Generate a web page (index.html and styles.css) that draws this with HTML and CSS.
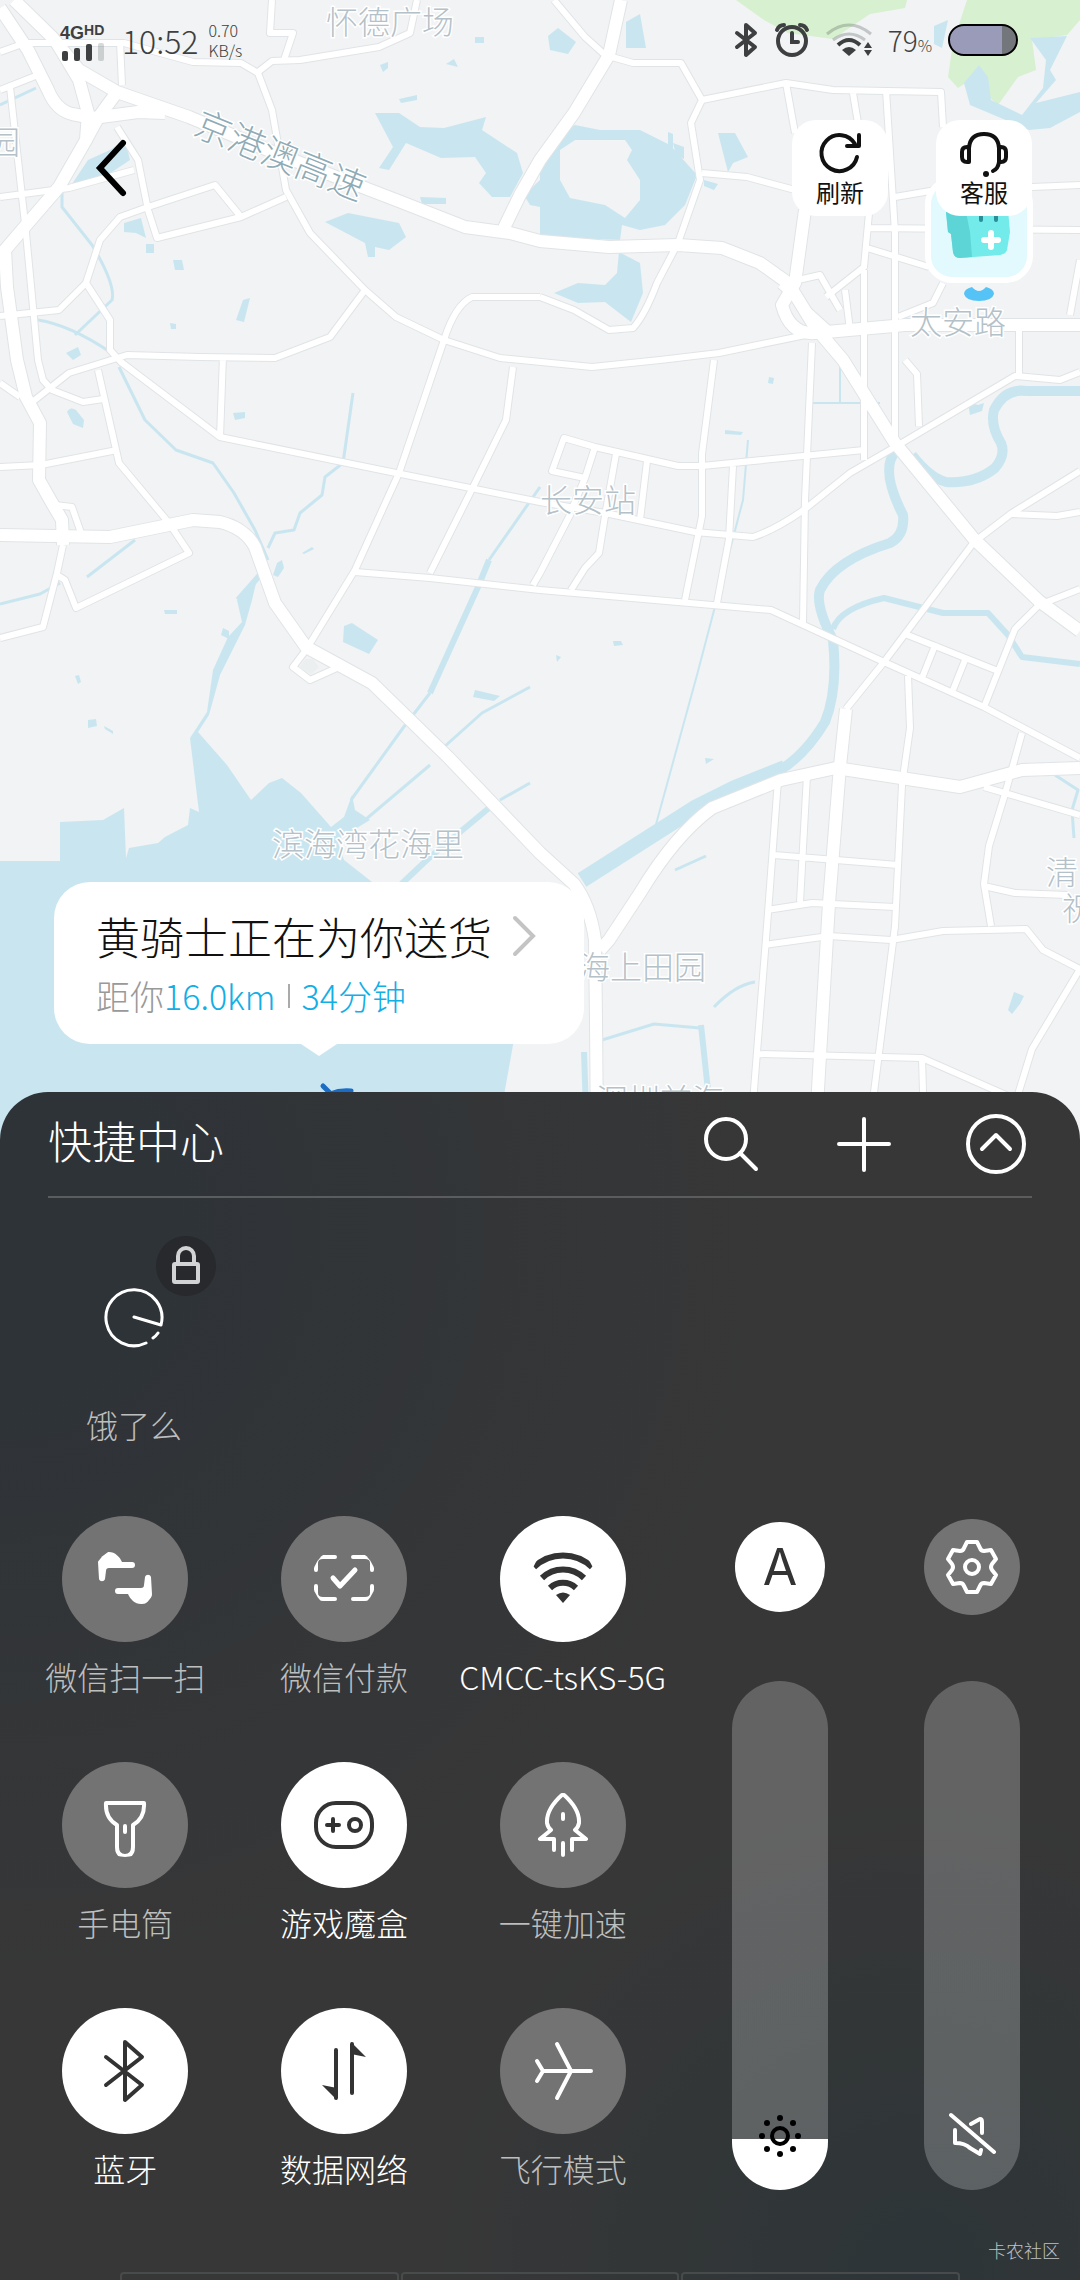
FILE: index.html
```html
<!DOCTYPE html>
<html lang="zh-CN">
	<head>
		<meta charset="UTF-8" />
		<meta name="viewport" content="width=device-width, initial-scale=1.0" />
		<title>快捷中心</title>
		<link rel="stylesheet" href="styles.css">
	</head>
	<body>
		<main class="screen">
			<section class="map">
				<svg class="map-canvas" viewBox="0 0 1080 1140" preserveAspectRatio="xMidYMin slice">
					<defs>
						<g id="highways">
							<path d="M14 0L52 37L79 70L117 92L189 117L275 153L344 180L396 200L465 227L510 233L540 241L609 247L678 245L722 248L760 263L788 283L815 327L843 360L895 443L974 539L1039 601L1080 631" />
							<path d="M0 8L28 50L48 90Q56 110 72 114L93 118L138 112L165 113" />
							<path d="M55 40L79 80L88 113L86 140L59 187L28 223L5 250L7 287L17 360L26 397L40 423L39 480L52 503L62 520L63 545" />
							<path d="M117 92L98 118L86 140M503 230L520 195L540 160L574 113L609 55L621 0" />
							<path d="M0 535L110 537L193 520L220 522Q245 528 255 547L275 603L306 647L372 683L448 757L540 853L574 884Q590 905 595 940L596 1020L597 1140" />
							<path d="M600 950L609 940L640 893Q675 835 712 808L781 780L836 768L960 787L1022 770L1080 768" />
							<path d="M846 709L840 766L829 903L815 1140M805 210L795 283L782 305Q790 335 815 333L905 325L1080 325" />
						</g>
						<g id="roads">
							<path d="M0 52L25 43L124 43L193 62L241 63L258 73L272 110L286 190L310 233L365 290L396 317L444 340L500 358L592 367L660 360L719 353L815 333" />
							<path d="M258 72L272 61L300 60L379 47L410 33L417 0M272 0L270 33L293 33L284 60M120 42L122 85" />
							<path d="M0 90L38 75M10 87L26 233L38 360L43 380L52 390L83 402L103 399M0 197L69 188L134 170" />
							<path d="M117 127L138 160L148 210L157 238L241 217L286 197M148 207L215 185L241 217" />
							<path d="M148 207L120 217L100 240L86 283L59 310L0 316M86 283L110 320L110 350L121 362L220 437L396 473L540 502L605 513L695 532L753 537Q775 530 805 509L850 473L895 447L1015 376L1060 380L1080 372" />
							<path d="M31 403L69 373L127 355L200 357L275 358L330 337L365 290M223 356L220 437" />
							<path d="M540 297L472 297Q455 305 444 340L399 473L355 570L306 650L293 667L310 680L339 667" />
							<path d="M540 297L574 310L609 330L633 328Q645 315 657 283L678 243L700 180L691 123L702 100L681 63L633 63L605 55L585 37L554 0" />
							<path d="M702 100L786 83L833 90L941 92L943 127M786 83L795 133M853 93L858 123M886 90L895 233L895 443M702 173L747 177L795 190" />
							<path d="M895 197L936 190M870 228L1080 230M1032 187L1080 185M869 213L864 267L826 297M864 247L929 267M943 283L933 303L898 317M1080 260L1070 315M1019 330L1019 374M864 270L864 460M812 343L805 500L803 623" />
							<path d="M905 360L917 374L919 426M785 283L820 275L840 310M780 285L830 330M845 290L850 330" />
							<path d="M98 370L119 463L169 523L189 553L76 608L65 580L57 575M0 467L41 465L117 450M55 505L72 507L81 533M0 383L20 397M63 545L57 573L43 627L0 638" />
							<path d="M513 367L506 420L475 483L430 573M355 572L430 578L540 590L771 610L884 662L984 707L1080 758M533 585L540 573L571 513" />
							<path d="M595 447L564 438L552 471L585 478M564 438L595 447L678 466L702 466L864 450M595 447L585 478L571 511M616 454L605 516L599 553L585 568L571 590M647 461L640 520M714 360L702 454L702 516L685 600M733 466L729 539L717 603" />
							<path d="M1080 471L1012 513L974 542L905 634L884 662L846 709M1012 514L1057 516L1080 512M908 676L910 728L902 785L895 926L868 1140" />
							<path d="M905 634L998 671M936 643L922 678M965 660L953 690M1080 589L1039 605L1015 629L984 707M1022 733L1005 794L989 846L984 884L991 926M984 787L1080 815M984 886L1015 893L1067 895" />
							<path d="M778 780L767 926L750 1140M807 775L800 902M774 855L898 865M767 910L812 903L895 907M764 945L829 936L891 940L943 931L1026 929L1043 950L1080 969L1032 1049L1004 1140M757 1054L922 1058L1040 1110M922 1058L923 1092" />
						</g>
					</defs>

					<g class="park">
						<path d="M736 0L764 20L788 33L833 39L870 14L905 8L907 0Z" />
						<path d="M967 0L953 43L948 77L958 88L970 80L998 105L1018 77L1036 70L1032 40L1067 35L1080 20V0Z" />
					</g>

					<g class="water">
						<path d="M0 861L60 861L60 822L103 820L124 808L126 858L129 848L158 843L165 837L188 825L190 808L199 812L190 738L207 712L213 670L228 637L242 622L237 600L258 575L252 600L245 625L220 675L209 715L198 732L227 765L251 800L269 783L282 778L301 793L331 827L344 817L352 795L355 810L370 820L337 840L344 860L372 882L420 900L530 950L496 1140H0Z" />
						<path d="M375 113L399 113L420 127L444 128L486 117L482 130L517 153L523 173L510 197L492 197L479 183L486 173L475 157L441 158L406 143L389 170L379 168L393 147Z" />
						<path d="M325 222L348 213L399 223L406 237L389 250L375 247L375 257L368 257L365 243Z" />
						<path d="M124 223L141 218L146 238L136 233L124 232ZM146 244h8v9h-8zM173 260h9l2 10h-9zM70 187L88 160L110 150L125 140L130 160L100 180Z" />
						<path fill-rule="evenodd" d="M540 170L555 135L575 125L600 130L640 130L670 145L697 175L685 205L665 225L640 230L622 225L620 240L540 237ZM560 150L575 140L625 140L632 150L627 160L640 180L640 200L625 218L605 205L570 198L560 180Z" />
						<path d="M554 293L578 283L605 285L617 273L619 252L640 263L643 293L631 322L605 302L578 303Z" />
						<path d="M718 133L735 133L748 157L733 163L728 172ZM668 132l5 2v18l-5-4zM673 143l11 4v12l-8-4zM704 180l14 4-4 6-10-4zM626 22l14-8 6 34h-20zM548 36l10-8 18 14-8 12-18-4z" />
						<path d="M964 83L979 65L988 77L991 100L1022 115L1043 88L1046 60L1030 38L1067 36L1050 70L1056 80L1036 103L1080 92V112L1050 128L1029 130L970 105ZM934 26L948 20L942 48L934 44Z" />
						<path d="M243 300L250 298L244 322L236 320ZM399 99l18-4v5l-16 3zM420 197l26 1v6h-24zM380 65l8-3v6l-5 4zM446 64l8-5 4 8zM66 353l12-6 3 8-8 5zM524 195L540 180V207L530 205ZM475 37h9v6h-9zM170 323l6 1v5h-5z" />
						<path d="M67 412q3-6 9-2l8 10-1 8-10-4zM233 413l12-1v6l-10 2zM344 626L352 623L378 640L369 654L343 642ZM475 690L500 696L494 701L473 697ZM277 563l5-3 2 8-6 9-5-2zM302 553l10-6 2 2-10 5zM223 628l6 3v8l-8-4zM75 676l4-1 2 7-3 2zM88 720l8-1 1 7-9 2zM104 726l9 5v3l-8-5zM164 610h13v4h-12z" />
						<path d="M725 430l18 2-2 3-16-1zM769 377l5 1-1 6-5-1zM613 641h8l2 4-9 1zM556 655l5 2-4 5zM1008 1010l6-18 10 4-4 8-8 10zM968 402l10 3 6-2-2 8-12 4zM705 758l9 1-8 5z" />
					</g>
					<g class="river">
						<path class="river-wide" d="M582 880L695 808L735 788L785 768" />
						<path class="river-main" d="M780 770Q805 755 825 722Q838 690 833 640Q815 605 820 590Q835 560 890 543Q905 535 903 515Q880 470 895 452" />
						<path class="river-main" d="M912 455Q930 478 946 482Q975 484 995 468Q1006 455 1001 443Q990 425 994 410Q1005 388 1026 391H1080" />
						<path class="river-mid" d="M833 629Q840 608 884 598L943 613L988 613L1008 635L1022 657L1080 664M584 1052L587 1140M701 1025L709 1100" />
						<path class="river-mid" d="M489 808L430 857L395 890M238 600L260 575M489 560L478 587L430 693" />
						<path d="M119 367L145 420L176 450L213 463L234 493L255 530L268 560M353 393L343 463L325 477L322 495L300 513L294 530L275 533L268 548" />
						<path d="M540 487L489 560M430 693L403 728L351 800M530 687L482 713L444 747M430 765L365 820M530 783L500 800" />
						<path d="M62 193L62 207L92 245Q116 285 112 300L75 335M38 320Q70 325 110 352M0 105L36 88M0 604L40 594L60 583M87 577L135 540" />
						<path d="M748 440L743 500L697 675L655 828M812 403H880M840 365V403" class="canal" />
						<path d="M602 1040L654 1024L700 1028M714 1007Q735 985 755 982M675 870L706 856M1055 775L1078 790L1072 810L1074 838" />
					</g>

					<use href="#roads" class="casing-road" />
					<use href="#highways" class="casing-highway" />
					<use href="#roads" class="fill-road" />
					<use href="#highways" class="fill-highway" />
					<path class="island" d="M299 668l6-9h8l6 8-8 7z" />

					<g class="place">
						<text x="326" y="34">怀德广场</text>
						<text x="-12" y="154">园</text>
						<text x="910" y="334">太安路</text>
						<text x="540" y="512">长安站</text>
						<text x="272" y="856">滨海湾花海里</text>
						<text x="578" y="979">海上田园</text>
						<text x="1046" y="884">清</text>
						<text x="1062" y="920">祝</text>
						<text x="596" y="1112">深圳前海</text>
					</g>
					<text class="place highway-name" transform="translate(192 134) rotate(22)">京港澳高速</text>

					<!-- destination pin -->
					<rect x="928" y="180" width="102" height="100" rx="24" fill="#e2fafd" stroke="#fff" stroke-width="6" />
					<path d="M946 212L1008 210L1010 232L1007 250Q1006 254 1000 255L960 258Q954 258 953 252L951 234L948 232Z" fill="#72ebea" />
					<path d="M946 212L966 212L970 232L972 257L960 258Q954 258 953 252L951 234L948 232Z" fill="#5dd5d6" />
					<path d="M981 214v6M996 214v6" stroke="#2a8d98" stroke-width="4" stroke-linecap="round" />
					<path d="M991 233v14M984 240h14" stroke="#fff" stroke-width="6" stroke-linecap="round" />
					<path d="M972 287Q979 295 986 287Q994 289 994 294Q992 301 979 301Q966 301 964 294Q964 289 972 287Z" fill="#55c3f5" />
					<path d="M323 1086L332 1095M330 1094Q340 1090 351 1091" stroke="#1b6cc4" stroke-width="5" stroke-linecap="round" fill="none" />
				</svg>

				<header class="status">
					<div class="carrier">
						<span>4G<small>HD</small></span>
						<svg width="46" height="18" viewBox="0 0 46 18" fill="#3d3f40">
							<rect x="2" y="8" width="6" height="10" rx="2" />
							<rect x="14" y="5" width="6" height="13" rx="2" />
							<rect x="26" y="1" width="6" height="17" rx="2" />
							<rect x="38" y="0" width="6" height="18" rx="2" opacity=".2" />
						</svg>
					</div>
					<time>10:52</time>
					<div class="speed">0.70<br>KB/s</div>
					<div class="status-right">
						<svg width="24" height="36" viewBox="0 0 24 36" fill="none" stroke="#3d3f40" stroke-width="4" stroke-linejoin="round" stroke-linecap="round"><path d="M3 11L21 25L12 33V3L21 11L3 25" /></svg>
						<svg width="36" height="36" viewBox="0 0 36 36" fill="none" stroke="#3d3f40" stroke-width="4" stroke-linecap="round"><circle cx="18" cy="19" r="14" /><path d="M18 11v9h6M3 8Q5 3 10 3M33 8Q31 3 26 3" /></svg>
						<svg width="46" height="36" viewBox="0 0 46 36" fill="none" stroke="#3d3f40" stroke-width="4"><path d="M1 12Q23-6 45 12M7 18Q23 6 39 18" stroke-width="3" opacity=".25" /><path d="M12 23Q23 13 34 23" /><path d="M16 28Q23 22 30 28L23 34Z" fill="#3d3f40" stroke="none" /><path d="M42 20l4 6h-8zM42 34l4-6h-8z" fill="#3d3f40" stroke="none" /></svg>
						<span class="percent">79<small>%</small></span>
						<svg width="70" height="32" viewBox="0 0 70 32"><rect x="1" y="1" width="68" height="30" rx="15" fill="#73767a" /><path d="M54 1H16a15 15 0 0 0 0 30H54Z" fill="#999bb8" /><rect x="1" y="1" width="68" height="30" rx="15" fill="none" stroke="#000" stroke-width="2" /></svg>
					</div>
				</header>

				<nav class="toolbar">
					<button class="back" aria-label="返回">
						<svg width="56" height="64" viewBox="0 0 56 64" fill="none" stroke="#000" stroke-width="6" stroke-linecap="round"><path d="M39 7L16 32L39 57" /></svg>
					</button>
					<button class="tool">
						<svg width="48" height="48" viewBox="0 0 48 48" fill="none" stroke="#111" stroke-width="4" stroke-linecap="round" stroke-linejoin="round"><path d="M41 27A18 18 0 1 1 39 14M43 5V16H31" /></svg>
						刷新
					</button>
					<button class="tool">
						<svg width="48" height="48" viewBox="0 0 48 48" fill="none" stroke="#111" stroke-width="4" stroke-linecap="round" stroke-linejoin="round"><path d="M9 18Q10 4 24 4T39 18V32Q38 39 33 41" /><path d="M9 17v15h-2q-5 0-5-5v-5q0-5 5-5zM39 17v15h2q5 0 5-5v-5q0-5-5-5z" /><circle cx="26" cy="44" r="3" fill="#111" stroke="none" /></svg>
						客服
					</button>
				</nav>

				<a class="rider" href="#">
					<span class="rider-title">黄骑士正在为你送货
						<svg width="24" height="42" viewBox="0 0 24 42" fill="none" stroke="#c4c4c4" stroke-width="4" stroke-linecap="round"><path d="M3 3L21 21L3 39" /></svg>
					</span>
					<span class="rider-info">距你<b>16.0km</b><i></i><b>34分钟</b></span>
				</a>
			</section>

			<section class="panel">
				<header class="panel-head">
					<h1>快捷中心</h1>
					<button aria-label="搜索"><svg width="60" height="60" viewBox="0 0 60 60"><circle cx="24" cy="25" r="20" /><path d="M38 39L54 55" /></svg></button>
					<button aria-label="添加"><svg width="60" height="60" viewBox="0 0 60 60"><path d="M30 5V56M5 30H55" /></svg></button>
					<button aria-label="收起"><svg width="60" height="60" viewBox="0 0 60 60"><circle cx="30" cy="30" r="28" /><path d="M16 35L30 21L44 35" /></svg></button>
				</header>

				<button class="shortcut">
					<span class="shortcut-icon">
						<svg width="64" height="64" viewBox="-32 -32 64 64"><path d="M12 25A28 28 0 1 1 27 7L0-1M24 15Q22 18 19 20" /></svg>
						<span class="lock">
							<svg width="60" height="60" viewBox="0 0 60 60"><rect x="18" y="28" width="24" height="18" rx="1" /><path d="M22 27V20a8 8 0 0 1 16 0V27" /></svg>
						</span>
					</span>
					饿了么
				</button>

				<div class="controls">
					<div class="toggles">
						<button class="toggle">
							<svg viewBox="-32 -32 64 64"><g fill="currentColor" stroke="none"><path id="scan-half" d="M-27-17a10 10 0 0 1 11-10c6 0 11 5 13 10h10a3 3 0 0 1 0 6H-16c-2 0-3 1-3 3l-1 8c-1 3-5 3-6 0z" /><use href="#scan-half" transform="rotate(180 0 -1)" /></g></svg>
							微信扫一扫
						</button>
						<button class="toggle">
							<svg viewBox="-32 -32 64 64"><path d="M-9-22H-21Q-28-22-28-16V-9M9-22H21Q28-22 28-16V-9M-9 20H-21Q-28 20-28 14V7M9 20H21Q28 20 28 14V7" /><path d="M-11-1L-4 7L11-9" stroke-width="5" /></svg>
							微信付款
						</button>
						<button class="toggle on" aria-pressed="true">
							<svg viewBox="-32 -32 64 64"><g stroke-width="6" stroke-linecap="butt"><path d="M-29-12A42 42 0 0 1 29-12" /><path d="M-21-1A30 30 0 0 1 21-1" /><path d="M-13 9A19 19 0 0 1 13 9" /></g><path d="M0 24L-7 16Q0 11 7 16Z" fill="currentColor" stroke="none" /></svg>
							CMCC-tsKS-5G
						</button>
						<button class="toggle">
							<svg viewBox="-32 -32 64 64"><path d="M-19-22H19Q20-7 8 0V22Q8 31 0 31T-8 22V0Q-20-7-19-22ZM0 1V7" /></svg>
							手电筒
						</button>
						<button class="toggle on" aria-pressed="true">
							<svg viewBox="-32 -32 64 64"><rect x="-28" y="-22" width="56" height="44" rx="20" /><path d="M-11-6V6M-17 0H-5" /><circle cx="11" cy="0" r="6" /></svg>
							游戏魔盒
						</button>
						<button class="toggle">
							<svg viewBox="-32 -32 64 64"><path d="M0-31Q17-16 16-2Q15 3 12 5L23 14H9V25M0-31Q-17-16-16-2Q-15 3-12 5L-23 14H-9V25M0-11V-6M0 18V30" /></svg>
							一键加速
						</button>
						<button class="toggle on" aria-pressed="true">
							<svg viewBox="-32 -32 64 64"><path d="M-19-14L17 14L0 29V-29L17-14L-19 14" /></svg>
							蓝牙
						</button>
						<button class="toggle on" aria-pressed="true">
							<svg viewBox="-32 -32 64 64"><path d="M-8-21V27M8 22V-27" /><path d="M-7 29L-22 14L-7 17ZM7-29L22-14L7-17Z" fill="currentColor" stroke="none" /></svg>
							数据网络
						</button>
						<button class="toggle">
							<svg viewBox="-32 -32 64 64"><path d="M28 0H-20L-26-10M-20 0L-26 10M-6-27L8 0L-6 27" /></svg>
							飞行模式
						</button>
					</div>

					<div class="levels">
						<button class="round auto" aria-label="自动亮度">A</button>
						<button class="round" aria-label="设置">
							<svg width="64" height="64" viewBox="-32 -32 64 64"><path d="M-5-25H5L8-19Q9-16 12-16L19-17L24-8L20-3Q18 0 20 3L24 8L19 17L12 16Q9 16 8 19L5 25H-5L-8 19Q-9 16-12 16L-19 17L-24 8L-20 3Q-18 0-20-3L-24-8L-19-17L-12-16Q-9-16-8-19Z" /><circle r="7" /></svg>
						</button>
						<label class="level">
							<input type="range" min="0" max="100" value="10" aria-label="亮度" style="--level: 10%" />
							<svg width="48" height="48" viewBox="-24 -24 48 48"><g fill="#000" stroke="none"><circle r="8" fill="none" stroke="#000" /><circle cy="-18" r="3" /><circle cy="18" r="3" /><circle cx="-18" r="3" /><circle cx="18" r="3" /><circle cx="13" cy="-13" r="3" /><circle cx="13" cy="13" r="3" /><circle cx="-13" cy="13" r="3" /><circle cx="-13" cy="-13" r="3" /></g></svg>
						</label>
						<label class="level">
							<input type="range" min="0" max="100" value="0" aria-label="音量" style="--level: 0%" />
							<svg width="48" height="48" viewBox="-24 -24 48 48"><path d="M-21-21L22 16M-17-6V7Q-7 7-2 12L8 18L9 14M-1-12L8-17Q10-17 10-14V-3" /></svg>
						</label>
					</div>
				</div>

				<footer class="panel-foot">
					<span>卡农社区</span>
					<div class="tabs"><div></div><div></div><div></div></div>
				</footer>
			</section>
		</main>
	</body>
</html>
```

FILE: styles.css
```css
* {
	box-sizing: border-box;
}

body {
	margin: 0;
	font-family: "Noto Sans CJK SC", "Liberation Sans", sans-serif;
	font-weight: 300;
	background: #f1f3f4;
}

button {
	background: none;
	border: none;
	padding: 0;
	font: inherit;
	color: inherit;
	cursor: pointer;
}

svg {
	display: block;
	flex-shrink: 0;
}

.screen {
	min-height: 100vh;
	display: flex;
	flex-direction: column;
}

/* map */
.map {
	position: relative;
	flex: 1 0 auto;
	display: flex;
	flex-direction: column;
	padding-bottom: 48px;
}

.map > * {
	position: relative;
}

/* runs on behind the rounded corners of the panel */
.map .map-canvas {
	position: absolute;
	top: 0;
	left: 0;
	width: 100%;
	height: calc(100% + 48px);
	background: #f1f3f4;
}

.park {
	fill: #d7f0cf;
}

.water {
	fill: #c9e6f0;
}

.river {
	fill: none;
	stroke: #c9e6f0;
	stroke-width: 3;
	stroke-linejoin: round;
}

.river-wide {
	stroke-width: 16;
}

.river-main {
	stroke-width: 10;
}

.river-mid {
	stroke-width: 6;
}

.canal {
	stroke-width: 2;
}

.map-canvas use {
	fill: none;
	stroke-linejoin: round;
}

.casing-road {
	stroke: #e1e4e6;
	stroke-width: 8;
}

.casing-highway {
	stroke: #e1e4e6;
	stroke-width: 14;
}

.fill-road {
	stroke: #fff;
	stroke-width: 6;
}

.fill-highway {
	stroke: #fff;
	stroke-width: 12;
}

.island {
	fill: #eceff0;
}

.place {
	font-size: 32px;
	fill: #b4c1c8;
	stroke: #fff;
	stroke-width: 3;
	paint-order: stroke;
}

.highway-name {
	font-size: 36px;
	fill: #8fabb5;
}

.status {
	display: flex;
	align-items: center;
	height: 80px;
	padding: 0 62px 0 60px;
	color: #3d3f40;
}

.carrier {
	font: bold 18px/20px "Liberation Sans", sans-serif;
}

.carrier small {
	font-size: 14px;
	vertical-align: 4px;
}

.status time {
	margin-left: 16px;
	font-size: 32px;
}

.speed {
	margin-left: 10px;
	font-size: 16px;
	line-height: 20px;
}

.status-right {
	margin-left: auto;
	display: flex;
	align-items: center;
	gap: 16px;
}

.percent {
	font-size: 28px;
}

.percent small {
	font-size: 16px;
}

.toolbar {
	display: flex;
	align-items: center;
	gap: 48px;
	margin-top: 40px;
	padding: 0 48px 0 84px;
}

.back {
	margin-right: auto;
}

.tool {
	width: 96px;
	height: 96px;
	border-radius: 24px;
	background: #fff;
	display: flex;
	flex-direction: column;
	align-items: center;
	justify-content: center;
	font-size: 24px;
	line-height: 28px;
	font-weight: 400;
	color: #111;
}

.rider {
	align-self: flex-start;
	margin: auto 0 0 54px;
	padding: 28px 48px 28px 42px;
	border-radius: 36px;
	background: #fff;
	display: flex;
	flex-direction: column;
	gap: 14px;
	color: #111;
	text-decoration: none;
}

/* bubble tail */
.rider::after {
	content: "";
	position: absolute;
	top: 100%;
	left: 50%;
	margin-left: -18px;
	border: 18px solid transparent;
	border-top: 12px solid #fff;
	border-bottom: 0;
}

.rider-title {
	display: flex;
	align-items: center;
	gap: 20px;
	font-size: 44px;
	line-height: 52px;
}

.rider-info {
	display: flex;
	align-items: center;
	font-size: 34px;
	line-height: 40px;
	color: #999;
}

.rider-info b {
	font-weight: 300;
	color: #12aee6;
}

.rider-info i {
	width: 2px;
	height: 24px;
	margin: 0 12px;
	background: #aaa;
}

/* quick settings */
.panel {
	position: relative;
	border-radius: 48px 48px 0 0;
	background:
		radial-gradient(circle at 85% 100%, #2d3538, transparent 32%),
		radial-gradient(ellipse at 0 12%, #2e3338 10%, transparent 50%),
		#373737;
	color: #fff;
}

.panel svg {
	fill: none;
	stroke: currentColor;
	stroke-width: 4;
	stroke-linecap: round;
	stroke-linejoin: round;
}

.panel-head {
	display: flex;
	align-items: center;
	gap: 72px;
	height: 106px;
	margin: 0 48px;
	padding-right: 6px;
	border-bottom: 2px solid #5b5c5d;
}

.panel-head h1 {
	margin: 0 auto 8px 0;
	font-size: 44px;
	font-weight: 300;
}

.shortcut {
	display: flex;
	flex-direction: column;
	align-items: center;
	gap: 52px;
	width: 172px;
	margin-left: 48px;
	padding: 88px 0 70px;
	font-size: 32px;
	line-height: 44px;
	color: #bdbebe;
}

.shortcut-icon {
	position: relative;
	color: #fff;
}

.panel .shortcut-icon > svg {
	stroke-width: 3;
}

.lock {
	position: absolute;
	left: 54px;
	top: -50px;
	border-radius: 50%;
	background: #27292c;
	color: #d2d3d4;
}

.controls {
	display: flex;
	gap: 12px;
	padding: 0 12px 0 16px;
}

.toggles {
	flex: 656;
	display: grid;
	grid-template-columns: repeat(3, 1fr);
	row-gap: 64px;
}

.toggle {
	display: flex;
	flex-direction: column;
	align-items: center;
	gap: 12px;
	min-width: 0;
	font-size: 32px;
	line-height: 44px;
	white-space: nowrap;
	color: #bdbebe;
}

.toggle svg {
	width: 126px;
	height: 126px;
	padding: 31px;
	border-radius: 50%;
	background: #737373;
	color: #fff;
}

.toggle.on {
	color: #fff;
}

.toggle.on svg {
	background: #fff;
	color: #333;
}

.levels {
	flex: 384;
	display: grid;
	grid-template-columns: 1fr 1fr;
	grid-template-rows: 96px 1fr;
	row-gap: 66px;
	place-items: center;
	padding-top: 3px;
}

.round {
	display: grid;
	place-items: center;
	width: 96px;
	height: 96px;
	border-radius: 50%;
	background: #737373;
}

.auto {
	width: 90px;
	height: 90px;
	background: #fff;
	color: #333;
	font: 400 50px/90px Inter, sans-serif;
}

/* takes its height from the toggles beside it, not from the input */
.level {
	position: relative;
	align-self: stretch;
	contain: size;
	width: 96px;
}

.level input {
	appearance: none;
	display: block;
	writing-mode: vertical-lr;
	direction: rtl;
	width: 100%;
	height: 100%;
	margin: 0;
	border-radius: 48px;
	background: linear-gradient(to top, #fff var(--level), #ffffff38 var(--level));
}

.level input::-webkit-slider-thumb {
	appearance: none;
	width: 96px;
	height: 1px;
}

.level svg {
	position: absolute;
	left: 24px;
	bottom: 30px;
	pointer-events: none;
}

.panel-foot {
	display: flex;
	flex-direction: column;
	align-items: flex-end;
	justify-content: flex-end;
	gap: 8px;
	height: 90px;
	font-size: 18px;
	line-height: 28px;
	color: #c0c2c3;
}

.panel-foot span {
	padding-right: 20px;
}

.tabs {
	align-self: stretch;
	display: flex;
	gap: 2px;
	padding: 0 120px;
}

.tabs div {
	flex: 1;
	height: 8px;
	border: 2px solid #484b4c;
	border-bottom: 0;
	border-radius: 4px 4px 0 0;
}
```
